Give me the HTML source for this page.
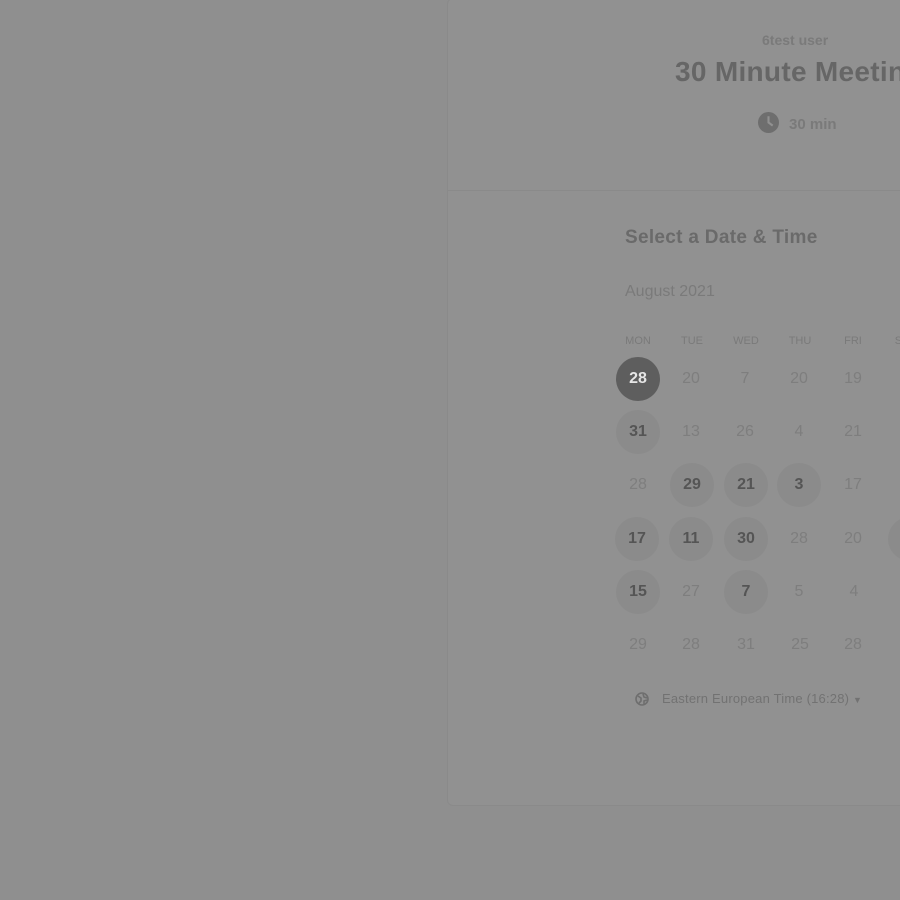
<!DOCTYPE html>
<html><head><style>
body{margin:0;width:900px;height:900px;background:#8f8f8f;overflow:hidden;position:relative;font-family:"Liberation Sans",sans-serif}
.card{position:absolute;left:447px;top:-2px;width:500px;height:806px;background:#919191;border:1px solid #8a8a8a;border-radius:6px}
.div{position:absolute;left:447px;top:190px;width:460px;height:1px;background:#8a8a8a}
.t{position:absolute;white-space:nowrap}
.d{position:absolute;width:44px;height:44px;margin:-21px 0 0 -22px;border-radius:50%;text-align:center;line-height:44px;font-size:16px;color:#7e7e7e}
.a{background:#8b8b8b;color:#555;font-weight:bold}
.s{background:#5e5e5e;color:#e6e6e6;font-weight:bold}
.h{position:absolute;font-size:11px;color:#7a7a7a;transform:translateX(-50%)}
</style></head><body>
<div class="card"></div><div class="div"></div>
<div class="t" style="left:762px;top:32px;font-size:14px;color:#7a7a7a;font-weight:bold">6test user</div>
<div class="t" style="left:675px;top:56px;font-size:28px;color:#666;font-weight:bold;letter-spacing:0.3px">30 Minute Meeting</div>
<svg style="position:absolute;left:758px;top:112px" width="21" height="21" viewBox="0 0 20 20"><circle cx="10" cy="10" r="10" fill="#6e6e6e"/><path d="M10 4v6l4 3" stroke="#919191" stroke-width="2" fill="none"/></svg>
<div class="t" style="left:789px;top:116px;font-size:15px;color:#7a7a7a;font-weight:bold">30 min</div>
<div class="t" style="left:625px;top:227px;font-size:19px;color:#6a6a6a;font-weight:bold;letter-spacing:0.3px">Select a Date &amp; Time</div>
<div class="t" style="left:625px;top:283px;font-size:16px;color:#7a7a7a">August 2021</div>
<div class="h" style="left:638px;top:335px">MON</div><div class="h" style="left:692px;top:335px">TUE</div><div class="h" style="left:746px;top:335px">WED</div><div class="h" style="left:800px;top:335px">THU</div><div class="h" style="left:853px;top:335px">FRI</div><div class="h" style="left:905px;top:335px">SAT</div>
<div class="d s" style="left:638px;top:378px">28</div><div class="d" style="left:691px;top:378px">20</div><div class="d" style="left:745px;top:378px">7</div><div class="d" style="left:799px;top:378px">20</div><div class="d" style="left:853px;top:378px">19</div>
<div class="d a" style="left:638px;top:431px">31</div><div class="d" style="left:691px;top:431px">13</div><div class="d" style="left:745px;top:431px">26</div><div class="d" style="left:799px;top:431px">4</div><div class="d" style="left:853px;top:431px">21</div>
<div class="d" style="left:638px;top:484px">28</div><div class="d a" style="left:692px;top:484px">29</div><div class="d a" style="left:746px;top:484px">21</div><div class="d a" style="left:799px;top:484px">3</div><div class="d" style="left:853px;top:484px">17</div>
<div class="d a" style="left:637px;top:538px">17</div><div class="d a" style="left:691px;top:538px">11</div><div class="d a" style="left:746px;top:538px">30</div><div class="d" style="left:799px;top:538px">28</div><div class="d" style="left:853px;top:538px">20</div><div class="d a" style="left:910px;top:538px"></div>
<div class="d a" style="left:638px;top:591px">15</div><div class="d" style="left:691px;top:591px">27</div><div class="d a" style="left:746px;top:591px">7</div><div class="d" style="left:799px;top:591px">5</div><div class="d" style="left:854px;top:591px">4</div>
<div class="d" style="left:638px;top:644px">29</div><div class="d" style="left:691px;top:644px">28</div><div class="d" style="left:746px;top:644px">31</div><div class="d" style="left:800px;top:644px">25</div><div class="d" style="left:853px;top:644px">28</div>
<svg style="position:absolute;left:635px;top:692px" width="14" height="14" viewBox="0 0 14 14"><circle cx="7" cy="7" r="6" fill="none" stroke="#6e6e6e" stroke-width="1.6"/><path d="M3 4l3 2v3l-2 2M8 2l1 3 3 1M9 12l0-3 3-1" stroke="#6e6e6e" stroke-width="1.6" fill="none"/></svg>
<div class="t" style="left:662px;top:691px;font-size:13px;color:#727272;letter-spacing:0.2px">Eastern European Time (16:28) <span style="font-size:9px">▼</span></div>
</body></html>
